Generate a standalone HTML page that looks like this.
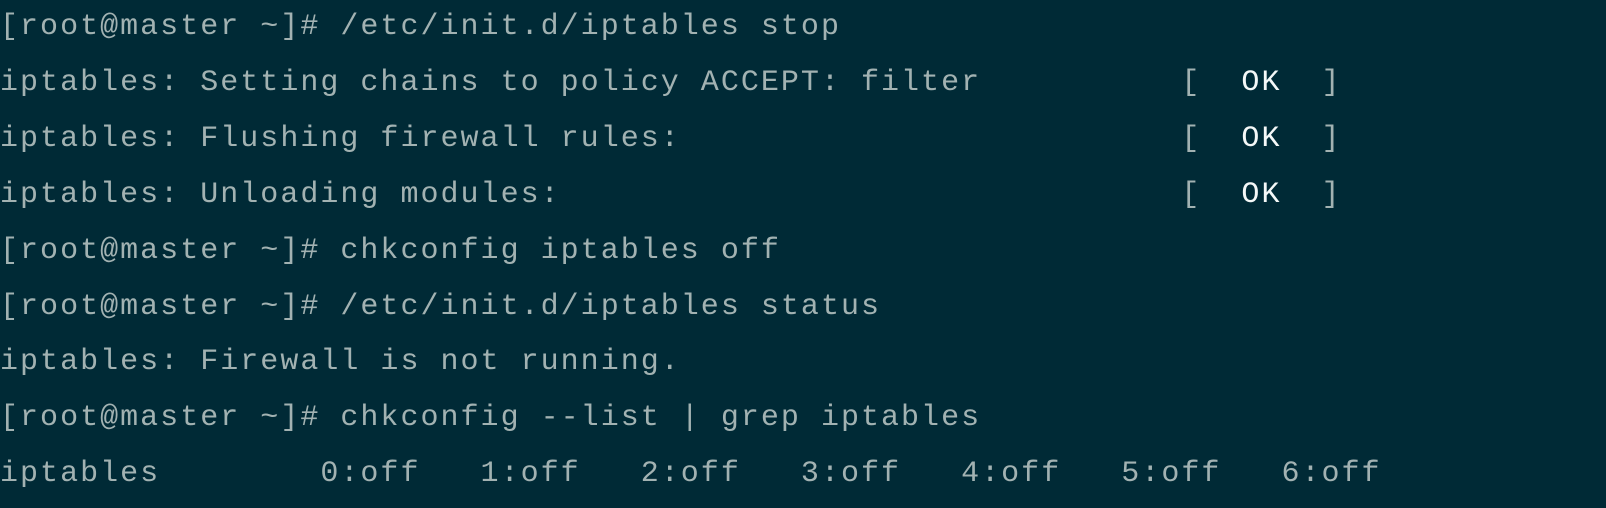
<!DOCTYPE html>
<html><head><style>
html,body{margin:0;padding:0;width:1606px;height:508px;overflow:hidden;background:#002a36;}
pre{margin:0;position:absolute;left:0;top:0px;font-family:"Liberation Mono",monospace;font-size:30px;letter-spacing:2.02px;line-height:55.9px;color:#a2b2b2;white-space:pre;}
b{font-weight:normal;color:#f4f8f8;}
</style></head><body>
<pre>[root@master ~]# /etc/init.d/iptables stop
iptables: Setting chains to policy ACCEPT: filter          [  <b>OK</b>  ]
iptables: Flushing firewall rules:                         [  <b>OK</b>  ]
iptables: Unloading modules:                               [  <b>OK</b>  ]
[root@master ~]# chkconfig iptables off
[root@master ~]# /etc/init.d/iptables status
iptables: Firewall is not running.
[root@master ~]# chkconfig --list | grep iptables
iptables        0:off   1:off   2:off   3:off   4:off   5:off   6:off</pre>
</body></html>
